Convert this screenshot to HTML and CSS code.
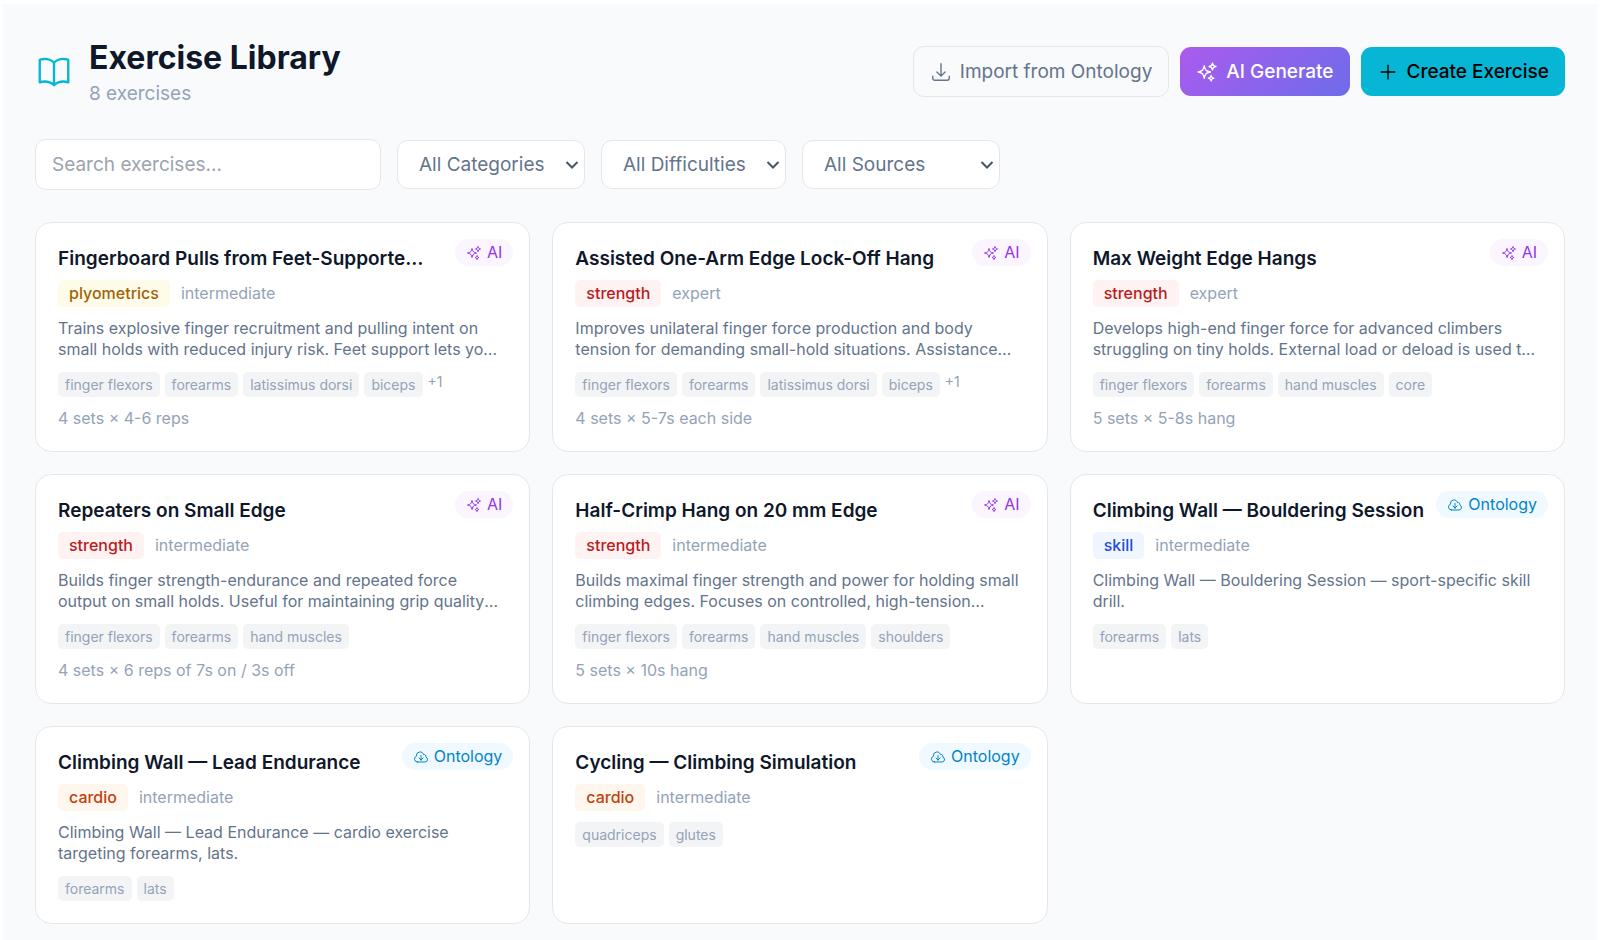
FILE: index.html
```html
<!DOCTYPE html>
<html lang="en">
<head>
<meta charset="utf-8">
<title>Exercise Library</title>
<link rel="stylesheet" href="styles.css">
</head>
<body>
<svg class="sprite" aria-hidden="true">
  <symbol id="stars" viewBox="0 0 24 24"><path d="M9.813 15.904 9 18.750l-.813-2.846a4.500 4.500 0 0 0-3.090-3.090L2.250 12l2.846-.813a4.500 4.500 0 0 0 3.090-3.090L9 5.250l.813 2.846a4.500 4.500 0 0 0 3.090 3.090L15.750 12l-2.846.813a4.500 4.500 0 0 0-3.090 3.090ZM18.259 8.715 18 9.750l-.259-1.035a3.375 3.375 0 0 0-2.455-2.456L14.250 6l1.036-.259a3.375 3.375 0 0 0 2.455-2.456L18 2.250l.259 1.035a3.375 3.375 0 0 0 2.456 2.456L21.750 6l-1.035.259a3.375 3.375 0 0 0-2.456 2.456ZM16.894 20.567 16.500 21.750l-.394-1.183a2.250 2.250 0 0 0-1.423-1.423L13.500 18.750l1.183-.394a2.250 2.250 0 0 0 1.423-1.423l.394-1.183.394 1.183a2.250 2.250 0 0 0 1.423 1.423l1.183.394-1.183.394a2.250 2.250 0 0 0-1.423 1.423Z"/></symbol>
  <symbol id="cloud" viewBox="0 0 24 24"><path d="M12 9.750v6.750m0 0-3-3m3 3 3-3m-8.250 6a4.500 4.500 0 0 1-1.410-8.775 5.250 5.250 0 0 1 10.233-2.330 3 3 0 0 1 3.758 3.848A3.752 3.752 0 0 1 18 19.500H6.750Z"/></symbol>
</svg>
<main class="page">
  <header class="header">
    <div class="heading">
      <svg class="book" viewBox="0 0 24 24" aria-hidden="true"><path d="M12 6.042A8.967 8.967 0 0 0 6 3.750c-1.052 0-2.062.180-3 .512v14.250A8.987 8.987 0 0 1 6 18c2.305 0 4.408.867 6 2.292m0-14.250a8.966 8.966 0 0 1 6-2.292c1.052 0 2.062.180 3 .512v14.250A8.987 8.987 0 0 0 18 18a8.967 8.967 0 0 0-6 2.292m0-14.250v14.250"/></svg>
      <div>
        <h1 class="title">Exercise Library</h1>
        <p class="count">8 exercises</p>
      </div>
    </div>
    <div class="actions">
      <button class="btn btn-outline" type="button"><svg class="btn-icon" viewBox="0 0 24 24" aria-hidden="true"><path d="M3 16.500v2.250A2.250 2.250 0 0 0 5.250 21h13.500A2.250 2.250 0 0 0 21 18.750V16.500M16.500 12 12 16.500m0 0L7.500 12m4.500 4.500V3"/></svg>Import from Ontology</button>
      <button class="btn btn-ai" type="button"><svg class="btn-icon" viewBox="0 0 24 24" aria-hidden="true"><use href="#stars"/></svg>AI Generate</button>
      <button class="btn btn-primary" type="button"><svg class="btn-icon" viewBox="0 0 24 24" aria-hidden="true"><path d="M12 4.500v15m7.500-7.500h-15"/></svg>Create Exercise</button>
    </div>
  </header>

  <form class="filters">
    <input class="search" type="search" placeholder="Search exercises..." aria-label="Search exercises">
    <select class="select categories" aria-label="Category"><option>All Categories</option></select>
    <select class="select difficulties" aria-label="Difficulty"><option>All Difficulties</option></select>
    <select class="select sources" aria-label="Source"><option>All Sources</option></select>
  </form>

  <section class="grid" aria-label="Exercises">
    <article class="card">
      <span class="badge badge-ai"><svg class="badge-icon" aria-hidden="true"><use href="#stars"/></svg>AI</span>
      <h2 class="name">Fingerboard Pulls from Feet-Supported Position</h2>
      <div class="meta"><span class="tag plyometrics">plyometrics</span><span class="level">intermediate</span></div>
      <p class="desc">Trains explosive finger recruitment and pulling intent on small holds with reduced injury risk. Feet support lets you control the load.</p>
      <div class="muscles"><span class="muscle">finger flexors</span><span class="muscle">forearms</span><span class="muscle">latissimus dorsi</span><span class="muscle">biceps</span><span class="more">+1</span></div>
      <p class="sets">4 sets × 4-6 reps</p>
    </article>
    <article class="card">
      <span class="badge badge-ai"><svg class="badge-icon" aria-hidden="true"><use href="#stars"/></svg>AI</span>
      <h2 class="name">Assisted One-Arm Edge Lock-Off Hang</h2>
      <div class="meta"><span class="tag strength">strength</span><span class="level">expert</span></div>
      <p class="desc">Improves unilateral finger force production and body tension for demanding small-hold situations. Assistance keeps the position controlled.</p>
      <div class="muscles"><span class="muscle">finger flexors</span><span class="muscle">forearms</span><span class="muscle">latissimus dorsi</span><span class="muscle">biceps</span><span class="more">+1</span></div>
      <p class="sets">4 sets × 5-7s each side</p>
    </article>
    <article class="card">
      <span class="badge badge-ai"><svg class="badge-icon" aria-hidden="true"><use href="#stars"/></svg>AI</span>
      <h2 class="name">Max Weight Edge Hangs</h2>
      <div class="meta"><span class="tag strength">strength</span><span class="level">expert</span></div>
      <p class="desc">Develops high-end finger force for advanced climbers struggling on tiny holds. External load or deload is used to set the intensity.</p>
      <div class="muscles"><span class="muscle">finger flexors</span><span class="muscle">forearms</span><span class="muscle">hand muscles</span><span class="muscle">core</span></div>
      <p class="sets">5 sets × 5-8s hang</p>
    </article>
    <article class="card">
      <span class="badge badge-ai"><svg class="badge-icon" aria-hidden="true"><use href="#stars"/></svg>AI</span>
      <h2 class="name">Repeaters on Small Edge</h2>
      <div class="meta"><span class="tag strength">strength</span><span class="level">intermediate</span></div>
      <p class="desc">Builds finger strength-endurance and repeated force output on small holds. Useful for maintaining grip quality throughout long routes.</p>
      <div class="muscles"><span class="muscle">finger flexors</span><span class="muscle">forearms</span><span class="muscle">hand muscles</span></div>
      <p class="sets">4 sets × 6 reps of 7s on / 3s off</p>
    </article>
    <article class="card">
      <span class="badge badge-ai"><svg class="badge-icon" aria-hidden="true"><use href="#stars"/></svg>AI</span>
      <h2 class="name">Half-Crimp Hang on 20 mm Edge</h2>
      <div class="meta"><span class="tag strength">strength</span><span class="level">intermediate</span></div>
      <p class="desc">Builds maximal finger strength and power for holding small climbing edges. Focuses on controlled, high-tension contractions throughout.</p>
      <div class="muscles"><span class="muscle">finger flexors</span><span class="muscle">forearms</span><span class="muscle">hand muscles</span><span class="muscle">shoulders</span></div>
      <p class="sets">5 sets × 10s hang</p>
    </article>
    <article class="card">
      <span class="badge badge-ontology"><svg class="badge-icon" aria-hidden="true"><use href="#cloud"/></svg>Ontology</span>
      <h2 class="name">Climbing Wall — Bouldering Session</h2>
      <div class="meta"><span class="tag skill">skill</span><span class="level">intermediate</span></div>
      <p class="desc">Climbing Wall — Bouldering Session — sport-specific skill drill.</p>
      <div class="muscles"><span class="muscle">forearms</span><span class="muscle">lats</span></div>
    </article>
    <article class="card">
      <span class="badge badge-ontology"><svg class="badge-icon" aria-hidden="true"><use href="#cloud"/></svg>Ontology</span>
      <h2 class="name">Climbing Wall — Lead Endurance</h2>
      <div class="meta"><span class="tag cardio">cardio</span><span class="level">intermediate</span></div>
      <p class="desc">Climbing Wall — Lead Endurance — cardio exercise targeting forearms, lats.</p>
      <div class="muscles"><span class="muscle">forearms</span><span class="muscle">lats</span></div>
    </article>
    <article class="card">
      <span class="badge badge-ontology"><svg class="badge-icon" aria-hidden="true"><use href="#cloud"/></svg>Ontology</span>
      <h2 class="name">Cycling — Climbing Simulation</h2>
      <div class="meta"><span class="tag cardio">cardio</span><span class="level">intermediate</span></div>
      <div class="muscles"><span class="muscle">quadriceps</span><span class="muscle">glutes</span></div>
    </article>
  </section>
</main>
</body>
</html>
```
FILE: styles.css
```css
*, *::before, *::after { box-sizing: border-box; }
html { background: #fff; }
body {
  margin: 4px 6px 0 3px;
  font-family: Inter, "Liberation Sans", sans-serif;
  color: #0f172a;
}
h1, h2, p { margin: 0; }
button, input, select { font: inherit; }
svg { fill: none; stroke: currentColor; stroke-width: 1.5; stroke-linecap: round; stroke-linejoin: round; flex: none; }
.sprite { position: absolute; width: 0; height: 0; }

.page { min-height: 936px; padding: 32px; background: #f8fafc; }

.header { display: flex; align-items: center; justify-content: space-between; margin-bottom: 32px; }
.heading { display: flex; align-items: center; gap: 16px; }
.book { width: 38px; height: 38px; color: #06b6d4; }
.title { font-size: 32px; line-height: 44px; font-weight: 700; }
.count { font-size: 19px; line-height: 27px; color: #94a3b8; }

.actions { display: flex; align-items: center; gap: 11px; }
.btn {
  display: flex; align-items: center; gap: 8px;
  padding: 11px 16px; border: 0; border-radius: 11px;
  font-size: 19px; line-height: 27px; font-weight: 500;
}
.btn-icon { width: 22px; height: 22px; }
.btn-outline { border: 1px solid #e5e7eb; background: transparent; color: #64748b; font-weight: 400; }
.btn-ai { background: linear-gradient(135deg, #ab5bee, #6d6cea); color: #fff; }
.btn-primary { background: #06b6d4; color: #000; }

.filters { display: flex; align-items: center; gap: 16px; margin-bottom: 32px; }
.search, .select {
  border: 1px solid #e5e7eb; border-radius: 11px; background: #fff;
  font-size: 19px; line-height: 27px;
}
.search { width: 346px; padding: 11px 16px; appearance: none; color: #0f172a; }
.search::placeholder { color: #9ca3af; }
.select {
  height: 49px; padding: 0 24px 0 21px; appearance: none; color: #64748b;
  background: #fff url("data:image/svg+xml,%3Csvg xmlns='http://www.w3.org/2000/svg' viewBox='0 0 14 10' fill='none' stroke='%23475569' stroke-width='2'%3E%3Cpath d='M1.500 2 7 7.500 12.500 2'/%3E%3C/svg%3E") right 5px center / 14px 10px no-repeat;
}
.categories { width: 188px; }
.difficulties { width: 185px; }
.sources { width: 198px; }

.grid { display: grid; grid-template-columns: repeat(3, minmax(0, 1fr)); gap: 22px; }
.card { position: relative; padding: 22px; border: 1px solid #e5e7eb; border-radius: 16px; background: #fff; }
.badge {
  position: absolute; top: 16px; right: 16px;
  display: flex; align-items: center; gap: 5px;
  padding: 3px 11px; border-radius: 14px;
  font-size: 16px; line-height: 21px;
}
.badge-icon { width: 16px; height: 16px; }
.badge-ai { background: #faf5ff; color: #9333ea; }
.badge-ontology { background: #f0f9ff; color: #0284c7; }
.name {
  padding-right: 78px; margin-bottom: 8px;
  overflow: hidden; white-space: nowrap; text-overflow: ellipsis;
  font-size: 19px; line-height: 27px; font-weight: 600;
}
.meta { display: flex; align-items: center; gap: 11px; margin-bottom: 11px; font-size: 16px; line-height: 21px; }
.tag { padding: 3px 11px; border-radius: 5px; font-weight: 500; }
.plyometrics { background: #fefce8; color: #a16207; }
.strength { background: #fef2f2; color: #b91c1c; }
.skill { background: #eff6ff; color: #1d4ed8; }
.cardio { background: #fff7ed; color: #c2410c; }
.level { color: #94a3b8; }
.desc {
  display: -webkit-box; -webkit-box-orient: vertical; -webkit-line-clamp: 2; overflow: hidden;
  margin-right: 3px; margin-bottom: 12px;
  font-size: 16px; line-height: 21px; color: #64748b;
}
.muscles { display: flex; flex-wrap: wrap; gap: 5px; font-size: 14px; line-height: 19px; color: #94a3b8; }
.muscle { padding: 3px 7px; border-radius: 5px; background: #f3f4f6; }
.sets { margin-top: 11px; font-size: 16px; line-height: 21px; color: #94a3b8; }
```
